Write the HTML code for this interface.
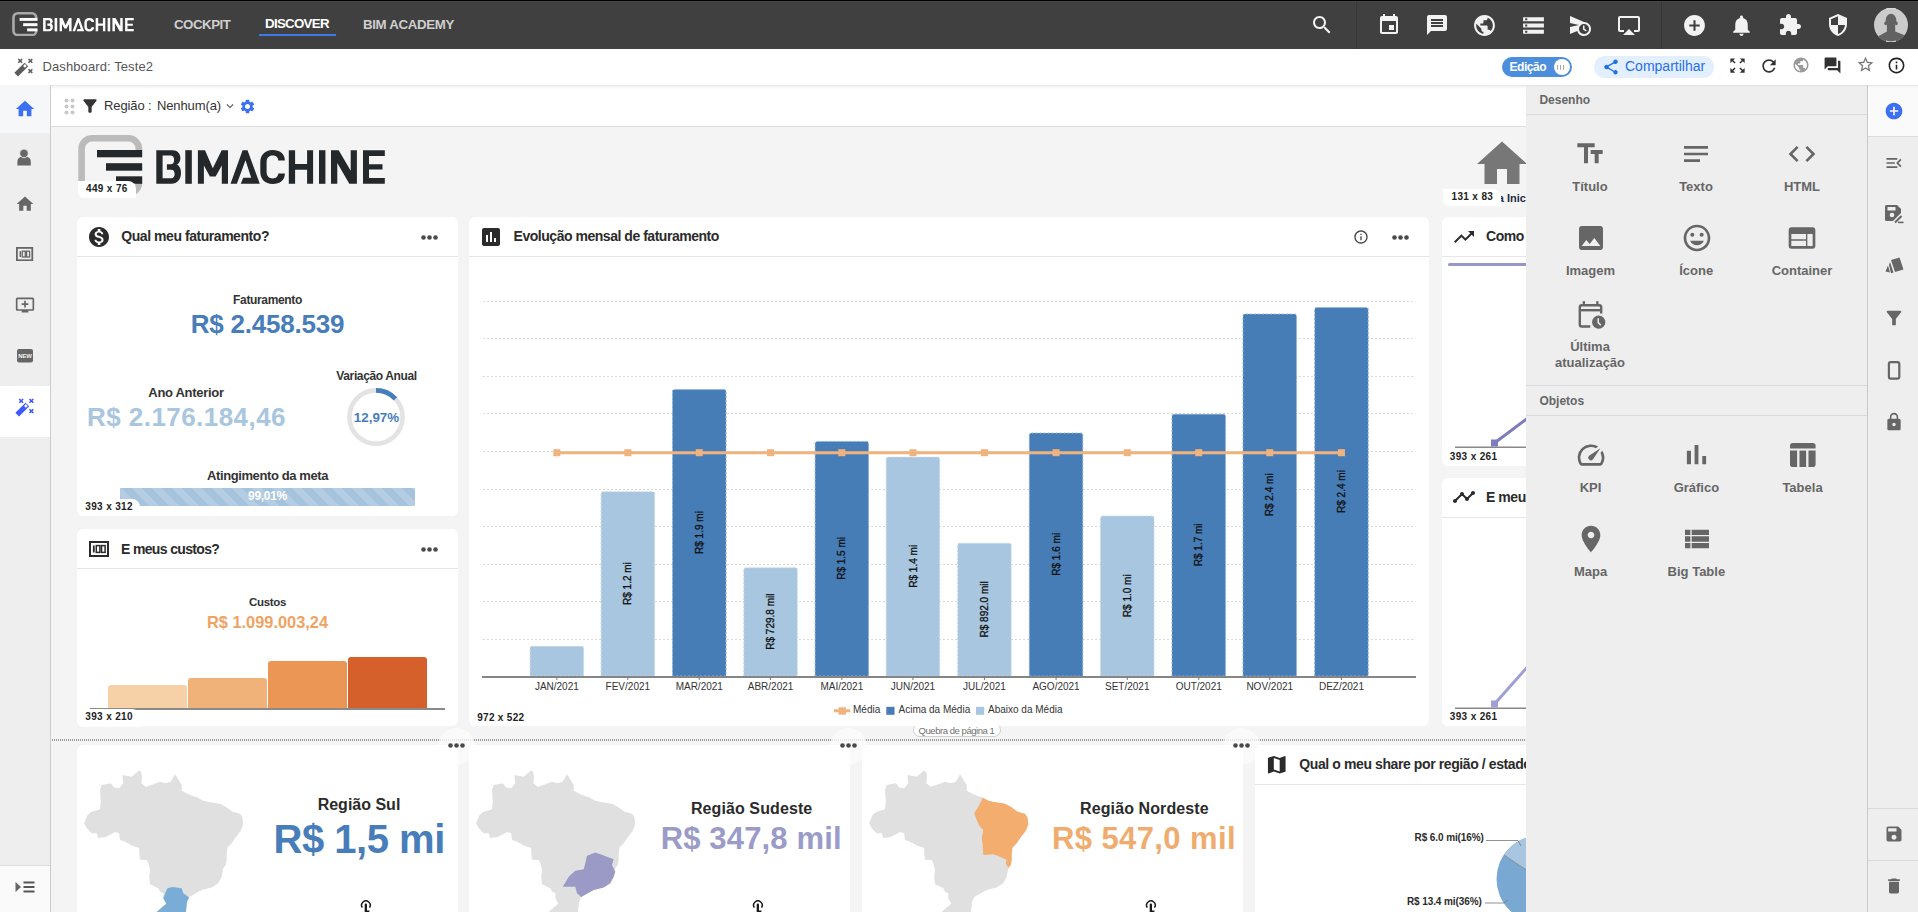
<!DOCTYPE html>
<html><head><meta charset="utf-8"><title>Dashboard</title><style>*{margin:0;padding:0;box-sizing:border-box}
html,body{width:1918px;height:912px;overflow:hidden;background:#f4f4f4;font-family:"Liberation Sans",sans-serif;color:#333}
.a{position:absolute}
.t{white-space:nowrap}
svg{display:block}
</style></head><body>
<div class="a" style="left:0px;top:0px;width:1918px;height:49px;background:#404040;"></div>
<div class="a" style="left:0px;top:0px;width:1918px;height:1px;background:#000;"></div>
<div class="a" style="left:0px;top:1px;width:1918px;height:1px;background:#474747;"></div>
<svg class="a" style="left:11.9px;top:11.7px;" width="121.9" height="24.6" viewBox="0 0 307 62">
<path d="M60.9 15 V14 A10.5 10.5 0 0 0 50.4 3.3 H14.1 A10.5 10.5 0 0 0 3.6 13.8 V47.7 A10.5 10.5 0 0 0 14.1 58.2 H50.4 A10.5 10.5 0 0 0 60.9 47.7 V48.8" fill="none" stroke="#a9a9a9" stroke-width="6.6"/>
<g fill="#ffffff">
<rect x="19" y="15" width="45.2" height="7.3"/><rect x="28" y="28.2" width="36.2" height="7.5"/><rect x="38" y="41.3" width="26.2" height="7.5"/>
<g transform="translate(78,15)">
<path fill-rule="evenodd" d="M0.3 0.2 H16.5 C21.5 0.2 24.4 3.5 24.4 8.2 C24.4 11.2 23 13.3 21 14.6 C23.6 16 25 19 25 23 C25 29.5 21.2 33.8 15.5 33.8 H0.3 Z M6.6 5.6 V28.3 H15.2 C17.6 28.3 18.6 26.6 18.6 24 C18.6 21.2 17.4 19.7 15.2 19.7 H10.9 V14.2 H14.6 C16.9 14.2 18.1 12.8 18.1 10 C18.1 7.2 16.9 5.6 14.6 5.6 Z"/>
<rect x="29.3" y="0.2" width="6.5" height="33.6"/>
<path d="M41.9 0.2 H49 L56.8 18.2 L65.7 0.2 H72 V33.8 H65.8 V15.5 L59.6 26.5 H53.9 L47.9 15.5 V33.8 H41.9 Z"/>
<path d="M74.55 33.8 L86.6 0.2 H91.5 L103.8 33.8 H84.8 L87.2 27.7 H95.2 L89.5 10.2 L80.9 33.8 Z"/>
<path d="M128.9 10.5 C128.9 4 124 0 116.6 0 C109 0 104.3 5 104.3 12 V22 C104.3 29 109 34 116.6 34 C124 34 128.9 30 128.9 23.5 H122.2 C122.2 26.5 120 28.4 116.6 28.4 C113 28.4 110.6 26 110.6 22 V12 C110.6 8 113 5.6 116.6 5.6 C120 5.6 122.2 7.5 122.2 10.5 Z"/>
<path d="M132.8 0.2 H139.1 V14 H151.1 V0.2 H157.1 V33.8 H151.1 V19.8 H139.1 V33.8 H132.8 Z"/>
<rect x="163" y="0.2" width="6.4" height="33.6"/>
<path d="M175 0.2 H182.7 L194.7 20.7 V0.2 H200.9 V33.8 H193.3 L181.3 12.9 V33.8 H175 Z"/>
<path d="M207 0.2 H228.8 V5.9 H213 V14.35 H226.5 V19.6 H213 V28.1 H228.8 V33.8 H207 Z"/>
</g></g></svg>
<div class="a t" style="top:17.94px;font-size:13.3px;line-height:13.3px;color:#cfcfcf;font-weight:bold;letter-spacing:-0.5px;left:174.00px;">COCKPIT</div>
<div class="a t" style="top:16.94px;font-size:13.3px;line-height:13.3px;color:#ffffff;font-weight:bold;letter-spacing:-0.7px;left:265.00px;">DISCOVER</div>
<div class="a" style="left:259px;top:34px;width:77px;height:2px;background:#3b7ae6;"></div>
<div class="a t" style="top:17.94px;font-size:13.3px;line-height:13.3px;color:#cfcfcf;font-weight:bold;letter-spacing:-0.35px;left:363.00px;">BIM ACADEMY</div>
<svg class="a" style="left:1309.60px;top:13.30px" width="24" height="24" viewBox="0 0 24 24"><path fill="#f2f2f2" d="M15.5 14h-.79l-.28-.27C15.41 12.59 16 11.11 16 9.5 16 5.91 13.09 3 9.5 3S3 5.91 3 9.5 5.91 16 9.5 16c1.61 0 3.09-.59 4.23-1.57l.27.28v.79l5 4.99L20.49 19l-4.99-5zm-6 0C7.01 14 5 11.99 5 9.5S7.01 5 9.5 5 14 7.01 14 9.5 11.99 14 9.5 14z"/></svg>
<div class="a" style="left:1356px;top:1px;width:1px;height:48px;background:#363636;"></div>
<svg class="a" style="left:1376.70px;top:13.20px" width="24" height="24" viewBox="0 0 24 24"><path fill="#f2f2f2" d="M17 12h-5v5h5v-5zM16 1v2H8V1H6v2H5c-1.11 0-1.99.9-1.99 2L3 19c0 1.1.89 2 2 2h14c1.1 0 2-.9 2-2V5c0-1.1-.9-2-2-2h-1V1h-2zm3 18H5V8h14v11z"/></svg>
<svg class="a" style="left:1425.00px;top:13.00px" width="24" height="24" viewBox="0 0 24 24"><path fill="#f2f2f2" d="M20 2H4c-1.1 0-1.99.9-1.99 2L2 22l4-4h14c1.1 0 2-.9 2-2V4c0-1.1-.9-2-2-2zm-2 12H6v-2h12v2zm0-3H6V9h12v2zm0-3H6V6h12v2z"/></svg>
<svg class="a" style="left:1472.20px;top:12.50px" width="25" height="25" viewBox="0 0 24 24"><path fill="#f2f2f2" d="M12 2C6.48 2 2 6.48 2 12s4.48 10 10 10 10-4.48 10-10S17.52 2 12 2zm-1 17.93c-3.95-.49-7-3.85-7-7.930 0-.62.08-1.21.21-1.79L9 15v1c0 1.1.9 2 2 2v1.93zm6.9-2.54c-.26-.81-1-1.39-1.9-1.39h-1v-3c0-.55-.45-1-1-1H8v-2h2c.55 0 1-.45 1-1V7h2c1.1 0 2-.9 2-2v-.41c2.930 1.19 5 4.06 5 7.41 0 2.08-.8 3.97-2.1 5.39z"/></svg>
<svg class="a" style="left:1520.50px;top:12.50px" width="25" height="25" viewBox="0 0 24 24"><path fill="#f2f2f2" d="M2 20h20v-4H2v4zm2-3h2v2H4v-2zM2 4v4h20V4H2zm4 3H4V5h2v2zm-4 7h20v-4H2v4zm2-3h2v2H4v-2z"/></svg>
<svg class="a" style="left:1568.30px;top:12.80px" width="24" height="24" viewBox="0 0 24 24"><path fill="#f2f2f2" d="M16.5 12.5H15v4l3 2 .75-1.23-2.25-1.52V12.5zM16 9L2 3v7l9 2-9 2v7l7.27-3.11C10.09 20.83 12.79 23 16 23c3.86 0 7-3.14 7-7s-3.14-7-7-7zm0 12c-2.75 0-4.98-2.22-5-4.97v-.07c.02-2.74 2.25-4.97 5-4.970 2.76 0 5 2.24 5 5S18.76 21 16 21z"/></svg>
<svg class="a" style="left:1617.00px;top:13.00px" width="24" height="24" viewBox="0 0 24 24"><path fill="#f2f2f2" d="M6 22h12l-6-6zM21 3H3c-1.1 0-2 .9-2 2v12c0 1.1.9 2 2 2h4v-2H3V5h18v12h-4v2h4c1.1 0 2-.9 2-2V5c0-1.1-.9-2-2-2z"/></svg>
<div class="a" style="left:1661px;top:1px;width:1px;height:48px;background:#363636;"></div>
<svg class="a" style="left:1681.50px;top:12.50px" width="25" height="25" viewBox="0 0 24 24"><path fill="#f2f2f2" d="M12 2C6.48 2 2 6.48 2 12s4.48 10 10 10 10-4.48 10-10S17.52 2 12 2zm5 11h-4v4h-2v-4H7v-2h4V7h2v4h4v2z"/></svg>
<svg class="a" style="left:1729.30px;top:12.50px" width="25" height="25" viewBox="0 0 24 24"><path fill="#f2f2f2" d="M12 22c1.1 0 2-.9 2-2h-4c0 1.1.89 2 2 2zm6-6v-5c0-3.07-1.64-5.64-4.5-6.32V4c0-.83-.67-1.5-1.5-1.5s-1.5.67-1.5 1.5v.68C7.63 5.36 6 7.92 6 11v5l-2 2v1h16v-1l-2-2z"/></svg>
<svg class="a" style="left:1778.00px;top:12.60px" width="24" height="24" viewBox="0 0 24 24"><path fill="#f2f2f2" d="M20.5 11H19V7c0-1.1-.9-2-2-2h-4V3.5C13 2.12 11.880 1 10.5 1S8 2.12 8 3.5V5H4c-1.1 0-1.99.9-1.99 2v3.8H3.5c1.49 0 2.7 1.21 2.7 2.7s-1.21 2.7-2.7 2.7H2V20c0 1.1.9 2 2 2h3.8v-1.5c0-1.49 1.21-2.7 2.7-2.7 1.49 0 2.7 1.21 2.7 2.7V22H17c1.1 0 2-.9 2-2v-4h1.5c1.38 0 2.5-1.12 2.5-2.5S21.88 11 20.5 11z"/></svg>
<svg class="a" style="left:1826.00px;top:13.00px" width="24" height="24" viewBox="0 0 24 24"><path fill="#f2f2f2" d="M12 1L3 5v6c0 5.55 3.84 10.74 9 12 5.16-1.26 9-6.45 9-12V5l-9-4zm0 10.99h7c-.53 4.12-3.28 7.79-7 8.94V12H5V6.3l7-3.11v8.8z"/></svg>
<svg class="a" style="left:1874px;top:8px" width="34" height="34" viewBox="0 0 34 34">
<defs><clipPath id="avc"><circle cx="17" cy="17" r="17"/></clipPath></defs>
<circle cx="17" cy="17" r="17" fill="#cbcbcb"/>
<g clip-path="url(#avc)" fill="#626262"><ellipse cx="17" cy="12.8" rx="5.4" ry="7"/><ellipse cx="11.6" cy="15.4" rx="1.3" ry="1.8"/><ellipse cx="22.4" cy="15.4" rx="1.3" ry="1.8"/>
<rect x="12.9" y="16" width="8.3" height="9"/><path d="M3.8 28.6 L12.9 23.4 H21.2 L30.6 27.2 L34 34 H0 Z"/></g>
<path d="M12 0.9 A17 17 0 0 1 22 0.9 M12 33.1 A17 17 0 0 0 22 33.1" stroke="#f0f0f0" stroke-opacity="0.7" stroke-width="1.1" fill="none"/></svg>
<div class="a" style="left:0px;top:49px;width:1918px;height:36px;background:#ffffff;"></div>
<svg class="a" style="left:8px;top:52px" width="40" height="30" viewBox="0 0 40 30"><g stroke="#5c5c5c" stroke-width="1.6" fill="none"><path d="M10.3 7 l3.8 3.8 M14.1 7 l-3.8 3.8 M20.5 7 l3.8 3.8 M24.3 7 l-3.8 3.8 M20.5 17.2 l3.8 3.8 M24.3 17.2 l-3.8 3.8"/></g><path d="M8.2 22.7 L18.4 12.5" stroke="#5c5c5c" stroke-width="5.2"/><rect x="15.6" y="12.6" width="2.6" height="2.6" fill="#fff" transform="rotate(45 16.9 13.9)"/></svg>
<div class="a t" style="top:60.00px;font-size:13px;line-height:13px;color:#555;font-weight:normal;letter-spacing:0.1px;left:42.50px;">Dashboard: Teste2</div>
<div class="a" style="left:1502px;top:57px;width:70px;height:20px;background:#4b8fdc;border-radius:10px"></div>
<div class="a t" style="top:61.04px;font-size:12px;line-height:12px;color:#ffffff;font-weight:bold;letter-spacing:-0.45px;left:1509.50px;">Edição</div>
<div class="a" style="left:1553.5px;top:59px;width:16px;height:16px;border-radius:50%;background:#fff"></div>
<svg class="a" style="left:1555px;top:63px" width="12" height="9" viewBox="0 0 12 9"><g stroke="#9a9a9a" stroke-width="0.9"><path d="M2.6 2V6.8M5.5 2V6.8M8.5 2V6.8"/></g></svg>
<div class="a" style="left:1594px;top:56px;width:120px;height:22px;background:#e4effd;border-radius:11px"></div>
<svg class="a" style="left:1601.50px;top:57.80px" width="18" height="18" viewBox="0 0 24 24"><path fill="#1f6fe5" d="M18 16.08c-.76 0-1.44.3-1.96.77L8.91 12.7c.05-.23.09-.46.09-.7s-.04-.47-.09-.7l7.05-4.11c.54.5 1.25.81 2.04.81 1.66 0 3-1.34 3-3s-1.34-3-3-3-3 1.34-3 3c0 .24.04.47.09.7L8.04 9.81C7.5 9.31 6.79 9 6 9c-1.66 0-3 1.34-3 3s1.34 3 3 3c.79 0 1.5-.31 2.04-.81l7.12 4.16c-.05.21-.08.43-.08.65 0 1.61 1.31 2.92 2.92 2.92 1.61 0 2.92-1.31 2.92-2.92s-1.31-2.92-2.92-2.92z"/></svg>
<div class="a t" style="top:59.35px;font-size:14px;line-height:14px;color:#1f6fe5;font-weight:normal;left:1625.00px;">Compartilhar</div>
<svg class="a" style="left:1727.50px;top:55.50px" width="19" height="19" viewBox="0 0 24 24"><path fill="#333" d="M15 3l2.3 2.3-2.89 2.87 1.42 1.42L18.7 6.7 21 9V3zM3 9l2.3-2.3 2.87 2.89 1.42-1.42L6.7 5.3 9 3H3zm6 12l-2.3-2.3 2.89-2.87-1.42-1.42L5.3 17.3 3 15v6zm12-6l-2.3 2.3-2.87-2.89-1.420 1.42 2.89 2.87L15 21h6z"/></svg>
<svg class="a" style="left:1759.20px;top:55.50px" width="20" height="20" viewBox="0 0 24 24"><path fill="#333" d="M17.65 6.35C16.2 4.9 14.21 4 12 4c-4.42 0-7.99 3.58-7.99 8s3.57 8 7.99 8c3.73 0 6.84-2.55 7.73-6h-2.08c-.82 2.33-3.04 4-5.65 4-3.31 0-6-2.69-6-6s2.69-6 6-6c1.66 0 3.14.69 4.22 1.78L13 11h7V4l-2.35 2.35z"/></svg>
<svg class="a" style="left:1792.00px;top:56.30px" width="18" height="18" viewBox="0 0 24 24"><path fill="#9a9a9a" d="M12 2C6.48 2 2 6.48 2 12s4.48 10 10 10 10-4.48 10-10S17.52 2 12 2zm-1 17.93c-3.95-.49-7-3.85-7-7.930 0-.62.08-1.21.21-1.79L9 15v1c0 1.1.9 2 2 2v1.93zm6.9-2.54c-.26-.81-1-1.39-1.9-1.39h-1v-3c0-.55-.45-1-1-1H8v-2h2c.55 0 1-.45 1-1V7h2c1.1 0 2-.9 2-2v-.41c2.930 1.19 5 4.06 5 7.41 0 2.08-.8 3.97-2.1 5.39z"/></svg>
<svg class="a" style="left:1823.30px;top:55.50px" width="19" height="19" viewBox="0 0 24 24"><path fill="#333" d="M21 6h-2v9H6v2c0 .55.45 1 1 1h11l4 4V7c0-.55-.45-1-1-1zm-4 6V3c0-.55-.45-1-1-1H3c-.55 0-1 .45-1 1v14l4-4h10c.55 0 1-.45 1-1z"/></svg>
<svg class="a" style="left:1855.50px;top:55.40px" width="19" height="19" viewBox="0 0 24 24"><path fill="#777" d="M22 9.24l-7.19-.62L12 2 9.19 8.63 2 9.24l5.46 4.73L5.82 21 12 17.27 18.18 21l-1.63-7.03L22 9.24zM12 15.4l-3.76 2.27 1-4.28-3.32-2.88 4.38-.38L12 6.1l1.71 4.04 4.38.38-3.32 2.88 1 4.28L12 15.4z"/></svg>
<svg class="a" style="left:1887.30px;top:55.80px" width="19" height="19" viewBox="0 0 24 24"><path fill="#222" d="M11 7h2v2h-2zm0 4h2v6h-2zm1-9C6.48 2 2 6.48 2 12s4.48 10 10 10 10-4.48 10-10S17.52 2 12 2zm0 18c-4.41 0-8-3.59-8-8s3.59-8 8-8 8 3.59 8 8-3.59 8-8 8z"/></svg>
<div class="a" style="left:0px;top:85px;width:50px;height:827px;background:#eeeeee;"></div>
<div class="a" style="left:50px;top:85px;width:1px;height:827px;background:#cccccc;"></div>
<div class="a" style="left:0px;top:85px;width:50px;height:48px;background:#f6f7f9;"></div>
<div class="a" style="left:0px;top:386px;width:50px;height:51px;background:#ffffff;"></div>
<div class="a" style="left:0px;top:865px;width:50px;height:1px;background:#dddddd;"></div>
<div class="a" style="left:0px;top:866px;width:50px;height:46px;background:#fafafa;"></div>
<svg class="a" style="left:14.00px;top:98.00px" width="22" height="22" viewBox="0 0 24 24"><path fill="#3d6ff2" d="M10 20v-6h4v6h5v-8h3L12 3 2 12h3v8z"/></svg>
<svg class="a" style="left:10px;top:145px" width="30" height="25" viewBox="10 145 30 25"><path d="M17.4 165.4 V161.5 Q17.4 156.6 24.1 156.6 Q30.8 156.6 30.8 161.5 V165.4 Z" fill="#666"/><circle cx="24" cy="153.4" r="4.3" fill="#666" stroke="#eee" stroke-width="0.9"/></svg>
<svg class="a" style="left:15.00px;top:193.50px" width="20" height="20" viewBox="0 0 24 24"><path fill="#666" d="M10 20v-6h4v6h5v-8h3L12 3 2 12h3v8z"/></svg>
<svg class="a" style="left:16.4px;top:246.9px" width="17.2" height="14.2" viewBox="0 0 17.2 14.2"><rect x="0.9" y="0.9" width="15.4" height="12.4" fill="none" stroke="#666" stroke-width="1.8"/><path d="M4.3 4.2V10" stroke="#666" stroke-width="1.5"/><rect x="6.3" y="4.2" width="3" height="5.8" fill="none" stroke="#666" stroke-width="1.3"/><rect x="10.6" y="4.2" width="3" height="5.8" fill="none" stroke="#666" stroke-width="1.3"/></svg>
<svg class="a" style="left:15.00px;top:295.00px" width="20" height="20" viewBox="0 0 24 24"><path fill="#666" d="M21 3H3c-1.11 0-2 .89-2 2v12c0 1.1.89 2 2 2h5v2h8v-2h5c1.1 0 1.99-.9 1.99-2L23 5c0-1.11-.9-2-2-2zm0 14H3V5h18v12zM16 10v2h-3v3h-2v-3H8v-2h3V7h2v3h3z"/></svg>
<svg class="a" style="left:16.9px;top:349.3px" width="16" height="13.6" viewBox="0 0 16 13.6"><rect x="0" y="0" width="16" height="13.6" rx="2" fill="#666"/><text x="8" y="9.3" font-family="Liberation Sans" font-size="6" font-weight="bold" fill="#f2f2f2" text-anchor="middle" letter-spacing="-0.2">NEW</text></svg>
<svg class="a" style="left:9.2px;top:392px" width="40" height="30" viewBox="0 0 40 30"><g stroke="#3d5afe" stroke-width="1.6" fill="none"><path d="M10.3 7 l3.8 3.8 M14.1 7 l-3.8 3.8 M20.5 7 l3.8 3.8 M24.3 7 l-3.8 3.8 M20.5 17.2 l3.8 3.8 M24.3 17.2 l-3.8 3.8"/></g><path d="M8.2 22.7 L18.4 12.5" stroke="#3d5afe" stroke-width="5.2"/><rect x="15.6" y="12.6" width="2.6" height="2.6" fill="#fff" transform="rotate(45 16.9 13.9)"/></svg>
<svg class="a" style="left:15px;top:881px" width="20" height="12" viewBox="0 0 20 12"><path d="M0.5 1 L6 6 L0.5 11 Z" fill="#666"/><g fill="#555"><rect x="8.5" y="0.5" width="11" height="2"/><rect x="8.5" y="5" width="11" height="2"/><rect x="8.5" y="9.5" width="11" height="2"/></g></svg>
<div class="a" style="left:51px;top:85px;width:1475px;height:41px;background:#ffffff;"></div>
<div class="a" style="left:51px;top:85px;width:1475px;height:4px;background:linear-gradient(#e6e6e6,#f3f3f3 40%,#ffffff);"></div>
<div class="a" style="left:51px;top:126px;width:1475px;height:1px;background:#dddddd;"></div>
<svg class="a" style="left:63.5px;top:97.5px" width="11" height="17" viewBox="0 0 11 17"><g fill="#c8c8c8"><circle cx="2.5" cy="2.5" r="2"/><circle cx="8.5" cy="2.5" r="2"/><circle cx="2.5" cy="8.5" r="2"/><circle cx="8.5" cy="8.5" r="2"/><circle cx="2.5" cy="14.5" r="2"/><circle cx="8.5" cy="14.5" r="2"/></g></svg>
<svg class="a" style="left:80.00px;top:96.00px" width="20" height="20" viewBox="0 0 24 24"><path fill="#333" d="M4.25 5.61C6.27 8.2 10 13 10 13v6c0 .55.45 1 1 1h2c.55 0 1-.45 1-1v-6s3.72-4.8 5.74-7.39c.51-.66.04-1.61-.79-1.61H5.04c-.83 0-1.3.95-.79 1.61z"/></svg>
<div class="a t" style="top:99.00px;font-size:13px;line-height:13px;color:#333;font-weight:normal;letter-spacing:-0.1px;left:104.00px;">Região :<span style="margin-left:5.3px">Nenhum(a)</span></div>
<svg class="a" style="left:222.50px;top:99.00px" width="14" height="14" viewBox="0 0 24 24"><path fill="#555" d="M16.59 8.59L12 13.17 7.41 8.59 6 10l6 6 6-6z"/></svg>
<svg class="a" style="left:239.00px;top:97.50px" width="17" height="17" viewBox="0 0 24 24"><path fill="#3d6ff2" d="M19.14 12.94c.04-.3.06-.61.06-.94 0-.32-.02-.64-.07-.94l2.03-1.58c.18-.14.23-.41.12-.61l-1.92-3.32c-.12-.22-.37-.29-.59-.22l-2.39.96c-.5-.38-1.03-.7-1.62-.94l-.36-2.54c-.04-.24-.24-.41-.48-.41h-3.84c-.24 0-.43.17-.47.41l-.36 2.54c-.59.24-1.13.57-1.62.94l-2.39-.96c-.22-.08-.47 0-.59.22L2.74 8.87c-.12.21-.08.47.12.61l2.03 1.58c-.05.3-.09.63-.09.94s.02.64.07.94l-2.030 1.58c-.18.14-.23.41-.12.61l1.92 3.32c.12.22.37.29.59.22l2.39-.96c.5.38 1.03.7 1.62.94l.36 2.54c.05.24.24.41.48.41h3.84c.24 0 .44-.17.47-.41l.36-2.54c.59-.24 1.13-.56 1.62-.94l2.39.96c.22.08.47 0 .59-.22l1.92-3.32c.12-.22.07-.47-.12-.61l-2.01-1.58zM12 15.6c-1.98 0-3.6-1.62-3.6-3.6s1.62-3.6 3.6-3.6 3.6 1.62 3.6 3.6-1.62 3.6-3.6 3.6z"/></svg>
<svg class="a" style="left:78px;top:135px;" width="307" height="62" viewBox="0 0 307 62">
<path d="M60.9 15 V14 A10.5 10.5 0 0 0 50.4 3.3 H14.1 A10.5 10.5 0 0 0 3.6 13.8 V47.7 A10.5 10.5 0 0 0 14.1 58.2 H50.4 A10.5 10.5 0 0 0 60.9 47.7 V48.8" fill="none" stroke="#bbbbbb" stroke-width="6.6"/>
<g fill="#25282b">
<rect x="19" y="15" width="45.2" height="7.3"/><rect x="28" y="28.2" width="36.2" height="7.5"/><rect x="38" y="41.3" width="26.2" height="7.5"/>
<g transform="translate(78,15)">
<path fill-rule="evenodd" d="M0.3 0.2 H16.5 C21.5 0.2 24.4 3.5 24.4 8.2 C24.4 11.2 23 13.3 21 14.6 C23.6 16 25 19 25 23 C25 29.5 21.2 33.8 15.5 33.8 H0.3 Z M6.6 5.6 V28.3 H15.2 C17.6 28.3 18.6 26.6 18.6 24 C18.6 21.2 17.4 19.7 15.2 19.7 H10.9 V14.2 H14.6 C16.9 14.2 18.1 12.8 18.1 10 C18.1 7.2 16.9 5.6 14.6 5.6 Z"/>
<rect x="29.3" y="0.2" width="6.5" height="33.6"/>
<path d="M41.9 0.2 H49 L56.8 18.2 L65.7 0.2 H72 V33.8 H65.8 V15.5 L59.6 26.5 H53.9 L47.9 15.5 V33.8 H41.9 Z"/>
<path d="M74.55 33.8 L86.6 0.2 H91.5 L103.8 33.8 H84.8 L87.2 27.7 H95.2 L89.5 10.2 L80.9 33.8 Z"/>
<path d="M128.9 10.5 C128.9 4 124 0 116.6 0 C109 0 104.3 5 104.3 12 V22 C104.3 29 109 34 116.6 34 C124 34 128.9 30 128.9 23.5 H122.2 C122.2 26.5 120 28.4 116.6 28.4 C113 28.4 110.6 26 110.6 22 V12 C110.6 8 113 5.6 116.6 5.6 C120 5.6 122.2 7.5 122.2 10.5 Z"/>
<path d="M132.8 0.2 H139.1 V14 H151.1 V0.2 H157.1 V33.8 H151.1 V19.8 H139.1 V33.8 H132.8 Z"/>
<rect x="163" y="0.2" width="6.4" height="33.6"/>
<path d="M175 0.2 H182.7 L194.7 20.7 V0.2 H200.9 V33.8 H193.3 L181.3 12.9 V33.8 H175 Z"/>
<path d="M207 0.2 H228.8 V5.9 H213 V14.35 H226.5 V19.6 H213 V28.1 H228.8 V33.8 H207 Z"/>
</g></g></svg>
<div class="a" style="left:78px;top:180.9px;width:58px;height:17.5px;background:#fff;border-radius:0 8px 0 6px"></div>
<div class="a t" style="top:184.13px;font-size:10px;line-height:10px;color:#222;font-weight:bold;letter-spacing:0.35px;left:86.00px;">449 x 76</div>
<div class="a" style="left:77px;top:217px;width:381px;height:299px;background:#fff;border-radius:6px"></div>
<div class="a" style="left:77px;top:256px;width:381px;height:1px;background:#e4e6e9;"></div>
<svg class="a" style="left:87.00px;top:225.00px" width="24" height="24" viewBox="0 0 24 24"><path fill="#2b2b2b" d="M12 2C6.48 2 2 6.48 2 12s4.48 10 10 10 10-4.48 10-10S17.52 2 12 2zm1.41 16.09V20h-2.67v-1.93c-1.71-.36-3.16-1.46-3.27-3.4h1.96c.1 1.05.82 1.87 2.65 1.87 1.96 0 2.4-.98 2.4-1.59 0-.83-.44-1.61-2.67-2.14-2.48-.6-4.18-1.62-4.18-3.67 0-1.72 1.39-2.84 3.11-3.21V4h2.67v1.95c1.86.45 2.79 1.86 2.85 3.39H14.3c-.05-1.11-.64-1.87-2.22-1.87-1.5 0-2.4.68-2.4 1.64 0 .84.65 1.39 2.67 1.91s4.18 1.39 4.18 3.91c-.01 1.83-1.38 2.83-3.12 3.16z"/></svg>
<div class="a t" style="top:229.05px;font-size:14px;line-height:14px;color:#2b2b2b;font-weight:bold;letter-spacing:-0.45px;left:121.30px;">Qual meu faturamento?</div>
<svg class="a" style="left:420.5px;top:234.5px" width="17" height="5" viewBox="0 0 17 5"><g fill="#4a4a4a"><circle cx="2.5" cy="2.5" r="2.3"/><circle cx="8.5" cy="2.5" r="2.3"/><circle cx="14.5" cy="2.5" r="2.3"/></g></svg>
<div class="a t" style="top:293.84px;font-size:12px;line-height:12px;color:#333;font-weight:bold;letter-spacing:-0.35px;left:67.50px;width:400px;text-align:center;">Faturamento</div>
<div class="a t" style="top:310.59px;font-size:26px;line-height:26px;color:#477db9;font-weight:bold;letter-spacing:-0.2px;left:67.50px;width:400px;text-align:center;">R$ 2.458.539</div>
<div class="a t" style="top:369.84px;font-size:12px;line-height:12px;color:#333;font-weight:bold;letter-spacing:-0.38px;left:176.50px;width:400px;text-align:center;">Variação Anual</div>
<div class="a t" style="top:386.00px;font-size:13px;line-height:13px;color:#333;font-weight:bold;letter-spacing:-0.3px;left:-14.00px;width:400px;text-align:center;">Ano Anterior</div>
<div class="a t" style="top:403.99px;font-size:26px;line-height:26px;color:#a9c6e0;font-weight:bold;letter-spacing:0.45px;left:-13.50px;width:400px;text-align:center;">R$ 2.176.184,46</div>
<svg class="a" style="left:346.2px;top:386.7px" width="60" height="60" viewBox="0 0 60 60">
<circle cx="30" cy="30" r="26.6" fill="none" stroke="#e3e3e3" stroke-width="4.6"/>
<circle cx="30" cy="30" r="26.6" fill="none" stroke="#477db9" stroke-width="4.6" stroke-dasharray="21.7 200" transform="rotate(-90 30 30)"/></svg>
<div class="a t" style="top:410.56px;font-size:13.4px;line-height:13.4px;color:#477db9;font-weight:bold;left:176.50px;width:400px;text-align:center;">12,97%</div>
<div class="a t" style="top:469.00px;font-size:13px;line-height:13px;color:#333;font-weight:bold;letter-spacing:-0.4px;left:67.50px;width:400px;text-align:center;">Atingimento da meta</div>
<div class="a" style="left:120px;top:488px;width:295px;height:18px;background:repeating-linear-gradient(45deg,#a6c3dd 0 7.05px,#b5cde3 7.05px 14.1px)"></div>
<div class="a t" style="top:489.84px;font-size:12px;line-height:12px;color:#ffffff;font-weight:bold;letter-spacing:-0.3px;left:67.50px;width:400px;text-align:center;">99,01%</div>
<div class="a" style="left:77px;top:498.5px;width:63px;height:17.5px;background:#fff;border-radius:0 8px 0 6px"></div>
<div class="a t" style="top:501.74px;font-size:10px;line-height:10px;color:#222;font-weight:bold;letter-spacing:0.35px;left:85.30px;">393 x 312</div>
<div class="a" style="left:77px;top:529px;width:381px;height:197px;background:#fff;border-radius:6px"></div>
<div class="a" style="left:77px;top:568px;width:381px;height:1px;background:#e4e6e9;"></div>
<svg class="a" style="left:89px;top:541px" width="20" height="16" viewBox="0 0 20 16"><rect x="1" y="1" width="18" height="14" fill="none" stroke="#2b2b2b" stroke-width="2"/><path d="M4.8 4.5V11.5" stroke="#2b2b2b" stroke-width="1.8"/><rect x="7.3" y="4.6" width="3.6" height="6.8" fill="none" stroke="#2b2b2b" stroke-width="1.5"/><rect x="12.5" y="4.6" width="3.6" height="6.8" fill="none" stroke="#2b2b2b" stroke-width="1.5"/></svg>
<div class="a t" style="top:541.55px;font-size:14px;line-height:14px;color:#2b2b2b;font-weight:bold;letter-spacing:-0.65px;left:121.00px;">E meus custos?</div>
<svg class="a" style="left:420.5px;top:546.5px" width="17" height="5" viewBox="0 0 17 5"><g fill="#4a4a4a"><circle cx="2.5" cy="2.5" r="2.3"/><circle cx="8.5" cy="2.5" r="2.3"/><circle cx="14.5" cy="2.5" r="2.3"/></g></svg>
<div class="a t" style="top:596.57px;font-size:11.5px;line-height:11.5px;color:#333;font-weight:bold;letter-spacing:-0.3px;left:67.50px;width:400px;text-align:center;">Custos</div>
<div class="a t" style="top:614.12px;font-size:16.4px;line-height:16.4px;color:#efa363;font-weight:bold;left:67.50px;width:400px;text-align:center;">R$ 1.099.003,24</div>
<div class="a" style="left:108px;top:685px;width:79px;height:24px;background:#f6d1a7;border-radius:3px 3px 0 0"></div>
<div class="a" style="left:188px;top:678px;width:79px;height:31px;background:#f1b27a;border-radius:3px 3px 0 0"></div>
<div class="a" style="left:268px;top:661.3px;width:79px;height:47.700000000000045px;background:#ec9655;border-radius:3px 3px 0 0"></div>
<div class="a" style="left:348px;top:656.8px;width:79px;height:52.200000000000045px;background:#d6602b;border-radius:3px 3px 0 0"></div>
<div class="a" style="left:89.5px;top:708px;width:355px;height:2px;background:#8a8a8a;"></div>
<div class="a" style="left:77px;top:709.1px;width:63px;height:17.5px;background:#fff;border-radius:0 8px 0 6px"></div>
<div class="a t" style="top:712.34px;font-size:10px;line-height:10px;color:#222;font-weight:bold;letter-spacing:0.35px;left:85.30px;">393 x 210</div>
<div class="a" style="left:469px;top:217px;width:960px;height:509px;background:#fff;border-radius:6px"></div>
<div class="a" style="left:469px;top:256px;width:960px;height:1px;background:#e4e6e9;"></div>
<svg class="a" style="left:479.00px;top:225.00px" width="24" height="24" viewBox="0 0 24 24"><path fill="#2b2b2b" d="M19 3H5c-1.1 0-2 .9-2 2v14c0 1.1.9 2 2 2h14c1.1 0 2-.9 2-2V5c0-1.1-.9-2-2-2zM9 17H7v-7h2v7zm4 0h-2V7h2v10zm4 0h-2v-4h2v4z"/></svg>
<div class="a t" style="top:229.05px;font-size:14px;line-height:14px;color:#2b2b2b;font-weight:bold;letter-spacing:-0.47px;left:513.60px;">Evolução mensal de faturamento</div>
<svg class="a" style="left:1353.00px;top:228.70px" width="16" height="16" viewBox="0 0 24 24"><path fill="#444" d="M11 7h2v2h-2zm0 4h2v6h-2zm1-9C6.48 2 2 6.48 2 12s4.48 10 10 10 10-4.48 10-10S17.52 2 12 2zm0 18c-4.41 0-8-3.59-8-8s3.59-8 8-8 8 3.59 8 8-3.59 8-8 8z"/></svg>
<svg class="a" style="left:1391.5px;top:234.5px" width="17" height="5" viewBox="0 0 17 5"><g fill="#4a4a4a"><circle cx="2.5" cy="2.5" r="2.3"/><circle cx="8.5" cy="2.5" r="2.3"/><circle cx="14.5" cy="2.5" r="2.3"/></g></svg>
<svg class="a" style="left:0;top:0" width="1918" height="912" viewBox="0 0 1918 912"><line x1="483" y1="301.5" x2="1413" y2="301.5" stroke="#d9d9d9" stroke-width="1" stroke-dasharray="2 2"/><line x1="483" y1="338.5" x2="1413" y2="338.5" stroke="#d9d9d9" stroke-width="1" stroke-dasharray="2 2"/><line x1="483" y1="376.5" x2="1413" y2="376.5" stroke="#d9d9d9" stroke-width="1" stroke-dasharray="2 2"/><line x1="483" y1="413.5" x2="1413" y2="413.5" stroke="#d9d9d9" stroke-width="1" stroke-dasharray="2 2"/><line x1="483" y1="451.5" x2="1413" y2="451.5" stroke="#d9d9d9" stroke-width="1" stroke-dasharray="2 2"/><line x1="483" y1="489.5" x2="1413" y2="489.5" stroke="#d9d9d9" stroke-width="1" stroke-dasharray="2 2"/><line x1="483" y1="526.5" x2="1413" y2="526.5" stroke="#d9d9d9" stroke-width="1" stroke-dasharray="2 2"/><line x1="483" y1="564.5" x2="1413" y2="564.5" stroke="#d9d9d9" stroke-width="1" stroke-dasharray="2 2"/><line x1="483" y1="601.5" x2="1413" y2="601.5" stroke="#d9d9d9" stroke-width="1" stroke-dasharray="2 2"/><line x1="483" y1="639.5" x2="1413" y2="639.5" stroke="#d9d9d9" stroke-width="1" stroke-dasharray="2 2"/><path d="M530.1 676 V648.3 Q530.1 646.3 532.1 646.3 H581.6 Q583.6 646.3 583.6 648.3 V676 Z" fill="#a8c6df" stroke="#c6d9ea" stroke-width="1" stroke-dasharray="2 2"/><path d="M601.1 676 V493.7 Q601.1 491.7 603.1 491.7 H652.6 Q654.6 491.7 654.6 493.7 V676 Z" fill="#a8c6df" stroke="#c6d9ea" stroke-width="1" stroke-dasharray="2 2"/><path d="M672.5 676 V391.6 Q672.5 389.6 674.5 389.6 H724.0 Q726.0 389.6 726.0 391.6 V676 Z" fill="#477db7" stroke="#8fb2d9" stroke-width="1" stroke-dasharray="2 2"/><path d="M743.8 676 V569.8 Q743.8 567.8 745.8 567.8 H795.3 Q797.3 567.8 797.3 569.8 V676 Z" fill="#a8c6df" stroke="#c6d9ea" stroke-width="1" stroke-dasharray="2 2"/><path d="M815.1 676 V443.4 Q815.1 441.4 817.1 441.4 H866.6 Q868.6 441.4 868.6 443.4 V676 Z" fill="#477db7" stroke="#8fb2d9" stroke-width="1" stroke-dasharray="2 2"/><path d="M886.2 676 V459.1 Q886.2 457.1 888.2 457.1 H937.7 Q939.7 457.1 939.7 459.1 V676 Z" fill="#a8c6df" stroke="#c6d9ea" stroke-width="1" stroke-dasharray="2 2"/><path d="M957.7 676 V545.3 Q957.7 543.3 959.7 543.3 H1009.2 Q1011.2 543.3 1011.2 545.3 V676 Z" fill="#a8c6df" stroke="#c6d9ea" stroke-width="1" stroke-dasharray="2 2"/><path d="M1029.3 676 V435.1 Q1029.3 433.1 1031.3 433.1 H1080.8 Q1082.8 433.1 1082.8 435.1 V676 Z" fill="#477db7" stroke="#8fb2d9" stroke-width="1" stroke-dasharray="2 2"/><path d="M1100.5 676 V518.0 Q1100.5 516.0 1102.5 516.0 H1152.0 Q1154.0 516.0 1154.0 518.0 V676 Z" fill="#a8c6df" stroke="#c6d9ea" stroke-width="1" stroke-dasharray="2 2"/><path d="M1172.0 676 V416.2 Q1172.0 414.2 1174.0 414.2 H1223.5 Q1225.5 414.2 1225.5 416.2 V676 Z" fill="#477db7" stroke="#8fb2d9" stroke-width="1" stroke-dasharray="2 2"/><path d="M1243.0 676 V316.1 Q1243.0 314.1 1245.0 314.1 H1294.5 Q1296.5 314.1 1296.5 316.1 V676 Z" fill="#477db7" stroke="#8fb2d9" stroke-width="1" stroke-dasharray="2 2"/><path d="M1314.7 676 V309.6 Q1314.7 307.6 1316.7 307.6 H1366.2 Q1368.2 307.6 1368.2 309.6 V676 Z" fill="#477db7" stroke="#8fb2d9" stroke-width="1" stroke-dasharray="2 2"/><rect x="482" y="676" width="934" height="2" fill="#858585"/><line x1="556.85" y1="677" x2="556.85" y2="680" stroke="#7a7a7a" stroke-width="1"/><text x="556.85" y="690.2" font-family="Liberation Sans" font-size="10" fill="#333" text-anchor="middle">JAN/2021</text><line x1="627.85" y1="677" x2="627.85" y2="680" stroke="#7a7a7a" stroke-width="1"/><text x="627.85" y="690.2" font-family="Liberation Sans" font-size="10" fill="#333" text-anchor="middle">FEV/2021</text><line x1="699.25" y1="677" x2="699.25" y2="680" stroke="#7a7a7a" stroke-width="1"/><text x="699.25" y="690.2" font-family="Liberation Sans" font-size="10" fill="#333" text-anchor="middle">MAR/2021</text><line x1="770.55" y1="677" x2="770.55" y2="680" stroke="#7a7a7a" stroke-width="1"/><text x="770.55" y="690.2" font-family="Liberation Sans" font-size="10" fill="#333" text-anchor="middle">ABR/2021</text><line x1="841.85" y1="677" x2="841.85" y2="680" stroke="#7a7a7a" stroke-width="1"/><text x="841.85" y="690.2" font-family="Liberation Sans" font-size="10" fill="#333" text-anchor="middle">MAI/2021</text><line x1="912.95" y1="677" x2="912.95" y2="680" stroke="#7a7a7a" stroke-width="1"/><text x="912.95" y="690.2" font-family="Liberation Sans" font-size="10" fill="#333" text-anchor="middle">JUN/2021</text><line x1="984.45" y1="677" x2="984.45" y2="680" stroke="#7a7a7a" stroke-width="1"/><text x="984.45" y="690.2" font-family="Liberation Sans" font-size="10" fill="#333" text-anchor="middle">JUL/2021</text><line x1="1056.05" y1="677" x2="1056.05" y2="680" stroke="#7a7a7a" stroke-width="1"/><text x="1056.05" y="690.2" font-family="Liberation Sans" font-size="10" fill="#333" text-anchor="middle">AGO/2021</text><line x1="1127.25" y1="677" x2="1127.25" y2="680" stroke="#7a7a7a" stroke-width="1"/><text x="1127.25" y="690.2" font-family="Liberation Sans" font-size="10" fill="#333" text-anchor="middle">SET/2021</text><line x1="1198.75" y1="677" x2="1198.75" y2="680" stroke="#7a7a7a" stroke-width="1"/><text x="1198.75" y="690.2" font-family="Liberation Sans" font-size="10" fill="#333" text-anchor="middle">OUT/2021</text><line x1="1269.75" y1="677" x2="1269.75" y2="680" stroke="#7a7a7a" stroke-width="1"/><text x="1269.75" y="690.2" font-family="Liberation Sans" font-size="10" fill="#333" text-anchor="middle">NOV/2021</text><line x1="1341.45" y1="677" x2="1341.45" y2="680" stroke="#7a7a7a" stroke-width="1"/><text x="1341.45" y="690.2" font-family="Liberation Sans" font-size="10" fill="#333" text-anchor="middle">DEZ/2021</text><line x1="556.85" y1="452.7" x2="1341.45" y2="452.7" stroke="#f0b37e" stroke-width="3"/><rect x="553.35" y="449.2" width="7" height="7" fill="#f0b37e"/><rect x="624.35" y="449.2" width="7" height="7" fill="#f0b37e"/><rect x="695.75" y="449.2" width="7" height="7" fill="#f0b37e"/><rect x="767.05" y="449.2" width="7" height="7" fill="#f0b37e"/><rect x="838.35" y="449.2" width="7" height="7" fill="#f0b37e"/><rect x="909.45" y="449.2" width="7" height="7" fill="#f0b37e"/><rect x="980.95" y="449.2" width="7" height="7" fill="#f0b37e"/><rect x="1052.55" y="449.2" width="7" height="7" fill="#f0b37e"/><rect x="1123.75" y="449.2" width="7" height="7" fill="#f0b37e"/><rect x="1195.25" y="449.2" width="7" height="7" fill="#f0b37e"/><rect x="1266.25" y="449.2" width="7" height="7" fill="#f0b37e"/><rect x="1337.95" y="449.2" width="7" height="7" fill="#f0b37e"/><text x="0" y="0" transform="translate(631.45 583.6) rotate(-90)" font-family="Liberation Sans" font-size="10" fill="#111" stroke="#111" stroke-width="0.3" text-anchor="middle">R$ 1.2 mi</text><text x="0" y="0" transform="translate(702.85 532.55) rotate(-90)" font-family="Liberation Sans" font-size="10" fill="#111" stroke="#111" stroke-width="0.3" text-anchor="middle">R$ 1.9 mi</text><text x="0" y="0" transform="translate(774.15 621.65) rotate(-90)" font-family="Liberation Sans" font-size="10" fill="#111" stroke="#111" stroke-width="0.3" text-anchor="middle">R$ 729.8 mil</text><text x="0" y="0" transform="translate(845.45 558.45) rotate(-90)" font-family="Liberation Sans" font-size="10" fill="#111" stroke="#111" stroke-width="0.3" text-anchor="middle">R$ 1.5 mi</text><text x="0" y="0" transform="translate(916.5500000000001 566.3) rotate(-90)" font-family="Liberation Sans" font-size="10" fill="#111" stroke="#111" stroke-width="0.3" text-anchor="middle">R$ 1.4 mi</text><text x="0" y="0" transform="translate(988.0500000000001 609.4) rotate(-90)" font-family="Liberation Sans" font-size="10" fill="#111" stroke="#111" stroke-width="0.3" text-anchor="middle">R$ 892.0 mil</text><text x="0" y="0" transform="translate(1059.6499999999999 554.3) rotate(-90)" font-family="Liberation Sans" font-size="10" fill="#111" stroke="#111" stroke-width="0.3" text-anchor="middle">R$ 1.6 mi</text><text x="0" y="0" transform="translate(1130.85 595.75) rotate(-90)" font-family="Liberation Sans" font-size="10" fill="#111" stroke="#111" stroke-width="0.3" text-anchor="middle">R$ 1.0 mi</text><text x="0" y="0" transform="translate(1202.35 544.85) rotate(-90)" font-family="Liberation Sans" font-size="10" fill="#111" stroke="#111" stroke-width="0.3" text-anchor="middle">R$ 1.7 mi</text><text x="0" y="0" transform="translate(1273.35 494.8) rotate(-90)" font-family="Liberation Sans" font-size="10" fill="#111" stroke="#111" stroke-width="0.3" text-anchor="middle">R$ 2.4 mi</text><text x="0" y="0" transform="translate(1345.05 491.55) rotate(-90)" font-family="Liberation Sans" font-size="10" fill="#111" stroke="#111" stroke-width="0.3" text-anchor="middle">R$ 2.4 mi</text><rect x="833.8" y="709.3" width="16.5" height="3" fill="#f0b37e"/><rect x="838.5" y="707.3" width="7.4" height="7.4" fill="#f0b37e"/><text x="853" y="712.5" font-family="Liberation Sans" font-size="10" fill="#333">Média</text><rect x="886.3" y="706.8" width="8.2" height="8" fill="#477db7"/><text x="898.5" y="712.5" font-family="Liberation Sans" font-size="10" fill="#333">Acima da Média</text><rect x="976" y="706.8" width="8.2" height="8" fill="#a8c6df"/><text x="988" y="712.5" font-family="Liberation Sans" font-size="10" fill="#333">Abaixo da Média</text></svg>
<div class="a t" style="top:712.83px;font-size:10px;line-height:10px;color:#222;font-weight:bold;letter-spacing:0.3px;left:477.20px;">972 x 522</div>
<div class="a" style="left:1442px;top:217px;width:381px;height:249px;background:#fff;border-radius:6px"></div>
<div class="a" style="left:1442px;top:256px;width:381px;height:1px;background:#e4e6e9;"></div>
<div class="a" style="left:1442px;top:478px;width:381px;height:248px;background:#fff;border-radius:6px"></div>
<div class="a" style="left:1442px;top:517px;width:381px;height:1px;background:#e4e6e9;"></div>
<svg class="a" style="left:1452.00px;top:225.00px" width="24" height="24" viewBox="0 0 24 24"><path fill="#2b2b2b" d="M16 6l2.29 2.29-4.88 4.88-4-4L2 16.59 3.41 18l6-6 4 4 6.3-6.29L22 12V6z"/></svg>
<div class="a t" style="top:229.05px;font-size:14px;line-height:14px;color:#2b2b2b;font-weight:bold;letter-spacing:-0.45px;left:1486.00px;">Como meu faturamento</div>
<div class="a" style="left:1448px;top:263px;width:200px;height:3px;background:#9896c8;border-radius:2px"></div>
<svg class="a" style="left:0;top:0" width="1918" height="912" viewBox="0 0 1918 912"><rect x="1455" y="446.5" width="300" height="1.5" fill="#888"/><line x1="1494.5" y1="443" x2="1560" y2="394" stroke="#7d7cbf" stroke-width="3"/><rect x="1491" y="439.5" width="7" height="7" fill="#7d7cbf"/><rect x="1455" y="707.5" width="300" height="1.5" fill="#888"/><line x1="1494.5" y1="704" x2="1560" y2="630" stroke="#a09fd6" stroke-width="3"/><rect x="1491" y="700.5" width="7" height="7" fill="#a09fd6"/></svg>
<div class="a" style="left:1442px;top:448.5px;width:63px;height:17.5px;background:#fff;border-radius:0 8px 0 6px"></div>
<div class="a t" style="top:451.74px;font-size:10px;line-height:10px;color:#222;font-weight:bold;letter-spacing:0.35px;left:1449.80px;">393 x 261</div>
<svg class="a" style="left:1452.00px;top:485.00px" width="24" height="24" viewBox="0 0 24 24"><path fill="#2b2b2b" d="M23 8c0 1.1-.9 2-2 2-.18 0-.35-.02-.51-.07l-3.56 3.55c.05.16.07.34.07.52 0 1.1-.9 2-2 2s-2-.9-2-2c0-.18.02-.36.07-.52l-2.55-2.55c-.16.05-.34.07-.52.07s-.36-.02-.52-.07l-4.55 4.56c.05.16.07.33.07.51 0 1.1-.9 2-2 2s-2-.9-2-2 .9-2 2-2c.18 0 .35.02.51.07l4.56-4.55C8.02 9.36 8 9.18 8 9c0-1.1.9-2 2-2s2 .9 2 2c0 .18-.02.36-.07.52l2.55 2.55c.16-.05.34-.07.52-.07s.36.02.52.07l3.55-3.56C19.02 8.35 19 8.18 19 8c0-1.1.9-2 2-2s2 .9 2 2z"/></svg>
<div class="a t" style="top:490.05px;font-size:14px;line-height:14px;color:#2b2b2b;font-weight:bold;letter-spacing:-0.45px;left:1486.00px;">E meu custo</div>
<div class="a" style="left:1442px;top:708.5px;width:63px;height:17.5px;background:#fff;border-radius:0 8px 0 6px"></div>
<div class="a t" style="top:711.74px;font-size:10px;line-height:10px;color:#222;font-weight:bold;letter-spacing:0.35px;left:1449.80px;">393 x 261</div>
<svg class="a" style="left:1472.00px;top:134.00px" width="60" height="60" viewBox="0 0 24 24"><path fill="#777" d="M10 20v-6h4v6h5v-8h3L12 3 2 12h3v8z"/></svg>
<div class="a t" style="top:193.09px;font-size:11px;line-height:11px;color:#1f2a44;font-weight:bold;left:1443.00px;width:120px;text-align:center;">Página Inicial</div>
<div class="a" style="left:1442.7px;top:188.5px;width:58.5px;height:17.5px;background:#fff;border-radius:0 8px 0 6px"></div>
<div class="a t" style="top:191.73px;font-size:10px;line-height:10px;color:#222;font-weight:bold;letter-spacing:0.35px;left:1451.50px;">131 x 83</div>
<div class="a" style="left:52px;top:739px;width:1474px;height:2px;background:repeating-linear-gradient(90deg,#9a9a9a 0 1px,transparent 1px 2px)"></div>
<div class="a" style="left:912.5px;top:722.5px;width:88px;height:14.5px;border:1px solid #d0d0d0;border-radius:7px;background:#fff"></div>
<div class="a" style="left:905px;top:716px;width:104px;height:10px;background:#ffffff;"></div>
<div class="a t" style="top:726.16px;font-size:9.5px;line-height:9.5px;color:#707070;font-weight:normal;letter-spacing:-0.45px;left:906.50px;width:100px;text-align:center;">Quebra de página 1</div>
<div class="a" style="left:437.5px;top:727.5px;width:37px;height:37px;border-radius:50%;background:rgba(252,252,252,0.75)"></div>
<div class="a" style="left:829.5px;top:727.5px;width:37px;height:37px;border-radius:50%;background:rgba(252,252,252,0.75)"></div>
<div class="a" style="left:1222.5px;top:727.5px;width:37px;height:37px;border-radius:50%;background:rgba(252,252,252,0.75)"></div>
<div class="a" style="left:77px;top:745px;width:381px;height:200px;background:#fff;border-radius:6px"></div>
<div class="a" style="left:469px;top:745px;width:381px;height:200px;background:#fff;border-radius:6px"></div>
<div class="a" style="left:862px;top:745px;width:381px;height:200px;background:#fff;border-radius:6px"></div>
<div class="a" style="left:1255px;top:745px;width:400px;height:200px;background:#fff;border-radius:6px"></div>
<div class="a" style="left:1255px;top:784px;width:400px;height:1px;background:#e4e6e9;"></div>
<svg class="a" style="left:448px;top:742.8px" width="17" height="5" viewBox="0 0 17 5"><g fill="#4a4a4a"><circle cx="2.5" cy="2.5" r="2.3"/><circle cx="8.5" cy="2.5" r="2.3"/><circle cx="14.5" cy="2.5" r="2.3"/></g></svg>
<svg class="a" style="left:840px;top:742.8px" width="17" height="5" viewBox="0 0 17 5"><g fill="#4a4a4a"><circle cx="2.5" cy="2.5" r="2.3"/><circle cx="8.5" cy="2.5" r="2.3"/><circle cx="14.5" cy="2.5" r="2.3"/></g></svg>
<svg class="a" style="left:1233px;top:742.8px" width="17" height="5" viewBox="0 0 17 5"><g fill="#4a4a4a"><circle cx="2.5" cy="2.5" r="2.3"/><circle cx="8.5" cy="2.5" r="2.3"/><circle cx="14.5" cy="2.5" r="2.3"/></g></svg>
<svg class="a" style="left:0;top:0" width="1918" height="912" viewBox="0 0 1918 912"><path d="M139.2 770.3 L141.3 772.5 L142.0 776.7 L141.3 783.3 L145.8 786.7 L153.3 784.2 L160.0 781.7 L165.8 783.3 L170.8 781.7 L175.0 774.2 L177.5 778.3 L181.7 785.0 L181.7 790.8 L190.0 795.0 L197.5 797.5 L203.3 800.8 L207.5 801.7 L220.0 803.7 L225.8 806.7 L232.5 811.7 L240.0 813.7 L242.5 817.5 L243.3 824.2 L240.8 830.8 L235.0 838.3 L231.7 843.3 L227.5 847.5 L226.7 853.3 L226.7 860.0 L225.8 865.0 L223.3 868.0 L221.7 876.7 L218.3 883.3 L211.7 887.5 L201.7 890.0 L195.8 893.3 L189.2 897.0 L187.0 901.7 L186.3 908.3 L185.0 920.0 L146.7 920.0 L156.7 912.0 L161.7 907.5 L166.3 903.7 L163.3 898.3 L163.3 893.3 L160.0 891.7 L158.3 888.3 L150.0 884.2 L149.2 876.7 L150.0 870.0 L148.3 863.3 L146.7 860.0 L140.0 859.7 L139.2 852.5 L139.2 848.0 L132.5 845.8 L125.0 841.7 L120.0 840.0 L119.2 833.3 L115.0 832.0 L105.8 837.0 L98.3 838.0 L96.7 833.3 L91.7 833.3 L86.7 828.3 L84.2 823.3 L87.5 815.0 L91.7 811.7 L100.0 809.2 L100.8 801.7 L100.0 790.0 L101.7 785.0 L110.8 783.3 L114.2 787.5 L119.2 788.3 L123.3 783.3 L122.5 775.0 L131.7 776.7 Z" fill="#e0e0e0"/><path d="M172.5 887.0 L181.7 888.3 L183.3 893.3 L189.2 897.5 L187.0 901.7 L186.3 908.3 L185.0 920.0 L146.7 920.0 L156.7 912.0 L161.7 907.5 L166.3 903.7 L163.3 898.3 L165.8 891.7 L167.5 888.3 Z" fill="#79acd6"/><path d="M362.29999999999995 907.6 A4.3 4.3 0 1 1 369.5 907.6" fill="none" stroke="#1a1a1a" stroke-width="1.5"/><rect x="364.7" y="903.6" width="2.3" height="10" rx="1" fill="#1a1a1a"/><rect x="365.9" y="910.5" width="3.5" height="2" fill="#1a1a1a"/><path d="M531.2 770.3 L533.3 772.5 L534.0 776.7 L533.3 783.3 L537.8 786.7 L545.3 784.2 L552.0 781.7 L557.8 783.3 L562.8 781.7 L567.0 774.2 L569.5 778.3 L573.7 785.0 L573.7 790.8 L582.0 795.0 L589.5 797.5 L595.3 800.8 L599.5 801.7 L612.0 803.7 L617.8 806.7 L624.5 811.7 L632.0 813.7 L634.5 817.5 L635.3 824.2 L632.8 830.8 L627.0 838.3 L623.7 843.3 L619.5 847.5 L618.7 853.3 L618.7 860.0 L617.8 865.0 L615.3 868.0 L613.7 876.7 L610.3 883.3 L603.7 887.5 L593.7 890.0 L587.8 893.3 L581.2 897.0 L579.0 901.7 L578.3 908.3 L577.0 920.0 L538.7 920.0 L548.7 912.0 L553.7 907.5 L558.3 903.7 L555.3 898.3 L555.3 893.3 L552.0 891.7 L550.3 888.3 L542.0 884.2 L541.2 876.7 L542.0 870.0 L540.3 863.3 L538.7 860.0 L532.0 859.7 L531.2 852.5 L531.2 848.0 L524.5 845.8 L517.0 841.7 L512.0 840.0 L511.2 833.3 L507.0 832.0 L497.8 837.0 L490.3 838.0 L488.7 833.3 L483.7 833.3 L478.7 828.3 L476.2 823.3 L479.5 815.0 L483.7 811.7 L492.0 809.2 L492.8 801.7 L492.0 790.0 L493.7 785.0 L502.8 783.3 L506.2 787.5 L511.2 788.3 L515.3 783.3 L514.5 775.0 L523.7 776.7 Z" fill="#e0e0e0"/><path d="M562.8 886.7 L568.7 876.7 L575.3 870.8 L583.7 869.2 L585.3 863.3 L587.0 855.8 L595.3 852.5 L600.3 854.2 L607.0 856.7 L613.7 859.2 L612.0 865.0 L615.3 871.7 L613.7 876.7 L610.3 883.3 L603.7 887.5 L593.7 890.0 L587.8 893.3 L581.2 897.0 L577.0 893.3 L575.3 886.7 Z" fill="#9b9ac7"/><path d="M754.3 907.6 A4.3 4.3 0 1 1 761.5 907.6" fill="none" stroke="#1a1a1a" stroke-width="1.5"/><rect x="756.6999999999999" y="903.6" width="2.3" height="10" rx="1" fill="#1a1a1a"/><rect x="757.9" y="910.5" width="3.5" height="2" fill="#1a1a1a"/><path d="M924.2 770.3 L926.3 772.5 L927.0 776.7 L926.3 783.3 L930.8 786.7 L938.3 784.2 L945.0 781.7 L950.8 783.3 L955.8 781.7 L960.0 774.2 L962.5 778.3 L966.7 785.0 L966.7 790.8 L975.0 795.0 L982.5 797.5 L988.3 800.8 L992.5 801.7 L1005.0 803.7 L1010.8 806.7 L1017.5 811.7 L1025.0 813.7 L1027.5 817.5 L1028.3 824.2 L1025.8 830.8 L1020.0 838.3 L1016.7 843.3 L1012.5 847.5 L1011.7 853.3 L1011.7 860.0 L1010.8 865.0 L1008.3 868.0 L1006.7 876.7 L1003.3 883.3 L996.7 887.5 L986.7 890.0 L980.8 893.3 L974.2 897.0 L972.0 901.7 L971.3 908.3 L970.0 920.0 L931.7 920.0 L941.7 912.0 L946.7 907.5 L951.3 903.7 L948.3 898.3 L948.3 893.3 L945.0 891.7 L943.3 888.3 L935.0 884.2 L934.2 876.7 L935.0 870.0 L933.3 863.3 L931.7 860.0 L925.0 859.7 L924.2 852.5 L924.2 848.0 L917.5 845.8 L910.0 841.7 L905.0 840.0 L904.2 833.3 L900.0 832.0 L890.8 837.0 L883.3 838.0 L881.7 833.3 L876.7 833.3 L871.7 828.3 L869.2 823.3 L872.5 815.0 L876.7 811.7 L885.0 809.2 L885.8 801.7 L885.0 790.0 L886.7 785.0 L895.8 783.3 L899.2 787.5 L904.2 788.3 L908.3 783.3 L907.5 775.0 L916.7 776.7 Z" fill="#e0e0e0"/><path d="M982.5 797.5 L988.3 800.8 L992.5 801.7 L1005.0 803.7 L1010.8 806.7 L1017.5 811.7 L1025.0 813.7 L1027.5 817.5 L1028.3 824.2 L1025.8 830.8 L1020.0 838.3 L1016.7 843.3 L1012.5 847.5 L1011.7 853.3 L1011.7 860.0 L1010.8 865.0 L1008.3 868.0 L1005.8 863.3 L1006.7 859.7 L1000.0 856.7 L993.3 854.2 L983.3 855.0 L982.5 843.3 L981.7 838.3 L983.3 830.0 L980.0 826.7 L976.7 820.0 L974.2 813.3 L978.3 806.7 L981.7 800.0 Z" fill="#f2ad6f"/><path d="M1147.3000000000002 907.6 A4.3 4.3 0 1 1 1154.5 907.6" fill="none" stroke="#1a1a1a" stroke-width="1.5"/><rect x="1149.7" y="903.6" width="2.3" height="10" rx="1" fill="#1a1a1a"/><rect x="1150.9" y="910.5" width="3.5" height="2" fill="#1a1a1a"/></svg>
<div class="a t" style="top:797.36px;font-size:16px;line-height:16px;color:#2b2b2b;font-weight:bold;left:159.00px;width:400px;text-align:center;">Região Sul</div>
<div class="a t" style="top:819.44px;font-size:40px;line-height:40px;color:#477db9;font-weight:bold;letter-spacing:-0.5px;left:159.20px;width:400px;text-align:center;">R$ 1,5 mi</div>
<div class="a t" style="top:801.26px;font-size:16px;line-height:16px;color:#2b2b2b;font-weight:bold;letter-spacing:0.1px;left:551.60px;width:400px;text-align:center;">Região Sudeste</div>
<div class="a t" style="top:822.76px;font-size:31px;line-height:31px;color:#9b9bc8;font-weight:bold;letter-spacing:0.15px;left:551.20px;width:400px;text-align:center;">R$ 347,8 mil</div>
<div class="a t" style="top:801.26px;font-size:16px;line-height:16px;color:#2b2b2b;font-weight:bold;letter-spacing:0.1px;left:944.40px;width:400px;text-align:center;">Região Nordeste</div>
<div class="a t" style="top:822.76px;font-size:31px;line-height:31px;color:#f0ab6e;font-weight:bold;letter-spacing:0.4px;left:944.00px;width:400px;text-align:center;">R$ 547,0 mil</div>
<svg class="a" style="left:1265.25px;top:753.25px" width="23.5" height="23.5" viewBox="0 0 24 24"><path fill="#2b2b2b" d="M20.5 3l-.16.03L15 5.1 9 3 3.36 4.9c-.21.07-.36.25-.36.48V20.5c0 .28.22.5.5.5l.16-.03L9 18.9l6 2.1 5.64-1.9c.21-.07.36-.25.36-.48V3.5c0-.28-.22-.5-.5-.5zM15 19l-6-2.11V5l6 2.11V19z"/></svg>
<div class="a t" style="top:757.35px;font-size:14px;line-height:14px;color:#2b2b2b;font-weight:bold;letter-spacing:-0.4px;left:1299.30px;">Qual o meu share por região / estado</div>
<svg class="a" style="left:0;top:0" width="1918" height="912" viewBox="0 0 1918 912">
<circle cx="1540" cy="879" r="43.5" fill="#79a9d3"/>
<path d="M1540 879 L1504 855 A43.5 43.5 0 0 1 1540 835.5 Z" fill="#a8c6df"/>
<path d="M1504 855 L1540 879" stroke="#888" stroke-width="0.8"/>
<path d="M1486 840.5 H1518 L1521 846" stroke="#777" stroke-width="0.8" fill="none"/>
<path d="M1485 903 H1504 L1508 900" stroke="#777" stroke-width="0.8" fill="none"/>
</svg>
<div class="a t" style="top:833.33px;font-size:10px;line-height:10px;color:#2b2b2b;font-weight:bold;letter-spacing:-0.1px;left:1414.60px;">R$ 6.0 mi(16%)</div>
<div class="a t" style="top:896.74px;font-size:10px;line-height:10px;color:#2b2b2b;font-weight:bold;letter-spacing:-0.1px;left:1407.00px;">R$ 13.4 mi(36%)</div>
<div class="a" style="left:1526px;top:85px;width:341px;height:827px;background:#eeeeee;"></div>
<div class="a" style="left:1526px;top:85px;width:341px;height:2px;background:linear-gradient(#e2e2e2,#ececec);"></div>
<div class="a t" style="top:93.84px;font-size:12px;line-height:12px;color:#666;font-weight:bold;left:1539.40px;">Desenho</div>
<div class="a" style="left:1526px;top:114px;width:341px;height:1px;background:#d9d9d9;"></div>
<svg class="a" style="left:1574.40px;top:137.90px" width="32" height="32" viewBox="0 0 24 24"><path fill="#666" d="M2.5 4v3h5v12h3V7h5V4h-13zm19 5h-9v3h3v7h3v-7h3V9z"/></svg>
<div class="a t" style="top:179.60px;font-size:13px;line-height:13px;color:#666;font-weight:bold;left:1530.00px;width:120px;text-align:center;">Título</div>
<svg class="a" style="left:1680.40px;top:137.90px" width="32" height="32" viewBox="0 0 24 24"><path fill="#666" d="M3 18h12v-2H3v2zM3 6v2h18V6H3zm0 7h18v-2H3v2z"/></svg>
<div class="a t" style="top:179.60px;font-size:13px;line-height:13px;color:#666;font-weight:bold;left:1636.00px;width:120px;text-align:center;">Texto</div>
<svg class="a" style="left:1786.40px;top:137.90px" width="32" height="32" viewBox="0 0 24 24"><path fill="#666" d="M9.4 16.6L4.8 12l4.6-4.6L8 6l-6 6 6 6 1.4-1.4zm5.2 0l4.6-4.6-4.6-4.6L16 6l6 6-6 6-1.4-1.4z"/></svg>
<div class="a t" style="top:179.60px;font-size:13px;line-height:13px;color:#666;font-weight:bold;left:1742.00px;width:120px;text-align:center;">HTML</div>
<svg class="a" style="left:1574.90px;top:222.40px" width="32" height="32" viewBox="0 0 24 24"><path fill="#666" d="M21 19V5c0-1.1-.9-2-2-2H5c-1.1 0-2 .9-2 2v14c0 1.1.9 2 2 2h14c1.1 0 2-.9 2-2zM8.5 13.5l2.5 3.01L14.5 12l4.5 6H5l3.5-4.5z"/></svg>
<div class="a t" style="top:264.00px;font-size:13px;line-height:13px;color:#666;font-weight:bold;left:1530.50px;width:120px;text-align:center;">Imagem</div>
<svg class="a" style="left:1680.60px;top:221.60px" width="32" height="32" viewBox="0 0 24 24"><path fill="#666" d="M11.99 2C6.47 2 2 6.48 2 12s4.47 10 9.99 10C17.52 22 22 17.52 22 12S17.52 2 11.99 2zM12 20c-4.42 0-8-3.58-8-8s3.58-8 8-8 8 3.58 8 8-3.58 8-8 8zm3.5-9c.83 0 1.5-.67 1.5-1.5S16.33 8 15.5 8 14 8.67 14 9.5s.67 1.5 1.5 1.5zm-7 0c.83 0 1.5-.67 1.5-1.5S9.33 8 8.5 8 7 8.67 7 9.5 7.67 11 8.5 11zm3.5 6.5c2.33 0 4.31-1.46 5.11-3.5H6.89c.8 2.04 2.78 3.5 5.11 3.5z"/></svg>
<div class="a t" style="top:264.00px;font-size:13px;line-height:13px;color:#666;font-weight:bold;left:1636.20px;width:120px;text-align:center;">Ícone</div>
<svg class="a" style="left:1786.40px;top:221.90px" width="32" height="32" viewBox="0 0 24 24"><path fill="#666" d="M20 4H4c-1.1 0-1.99.9-1.99 2L2 18c0 1.1.9 2 2 2h16c1.1 0 2-.9 2-2V6c0-1.1-.9-2-2-2zm-5 14H4v-4h11v4zm0-5H4V9h11v4zm5 5h-4V9h4v9z"/></svg>
<div class="a t" style="top:264.00px;font-size:13px;line-height:13px;color:#666;font-weight:bold;left:1742.00px;width:120px;text-align:center;">Container</div>
<svg class="a" style="left:1574.90px;top:438.90px" width="32" height="32" viewBox="0 0 24 24"><path fill="#666" d="M20.38 8.57l-1.23 1.85a8 8 0 0 1-.22 7.58H5.07A8 8 0 0 1 15.58 6.85l1.85-1.23A10 10 0 0 0 3.35 19a2 2 0 0 0 1.72 1h13.85a2 2 0 0 0 1.74-1 10 10 0 0 0-.27-10.44zm-9.79 6.84a2 2 0 0 0 2.83 0l5.66-8.49-8.49 5.66a2 2 0 0 0 0 2.83z"/></svg>
<div class="a t" style="top:480.50px;font-size:13px;line-height:13px;color:#666;font-weight:bold;left:1530.50px;width:120px;text-align:center;">KPI</div>
<svg class="a" style="left:1680.30px;top:438.40px" width="33" height="33" viewBox="0 0 24 24"><path fill="#666" d="M5 9.2h3V19H5zM10.6 5h2.8v14h-2.8zm5.6 8H19v6h-2.8z"/></svg>
<div class="a t" style="top:480.50px;font-size:13px;line-height:13px;color:#666;font-weight:bold;left:1636.40px;width:120px;text-align:center;">Gráfico</div>
<svg class="a" style="left:1574.90px;top:523.30px" width="32" height="32" viewBox="0 0 24 24"><path fill="#666" d="M12 2C8.13 2 5 5.13 5 9c0 5.25 7 13 7 13s7-7.75 7-13c0-3.87-3.13-7-7-7zm0 9.5c-1.38 0-2.5-1.12-2.5-2.5s1.12-2.5 2.5-2.5 2.5 1.12 2.5 2.5-1.12 2.5-2.5 2.5z"/></svg>
<div class="a t" style="top:565.00px;font-size:13px;line-height:13px;color:#666;font-weight:bold;left:1530.50px;width:120px;text-align:center;">Mapa</div>
<svg class="a" style="left:1680.80px;top:523.30px" width="32" height="32" viewBox="0 0 24 24"><path fill="#666" d="M3 14h4v-4H3v4zm0 5h4v-4H3v4zM3 9h4V5H3v4zm5 5h13v-4H8v4zm0 5h13v-4H8v4zM8 5v4h13V5H8z"/></svg>
<div class="a t" style="top:565.00px;font-size:13px;line-height:13px;color:#666;font-weight:bold;left:1636.40px;width:120px;text-align:center;">Big Table</div>
<svg class="a" style="left:1574px;top:299px" width="34" height="34" viewBox="0 0 34 34">
<path d="M16.3 27.5 H7.8 Q5.8 27.5 5.8 25.5 V8.2 Q5.8 6.2 7.8 6.2 H25.2 Q27.2 6.2 27.2 8.2 V14.5" fill="none" stroke="#666" stroke-width="2.4"/>
<rect x="5.8" y="10" width="21.4" height="2.4" fill="#666"/>
<rect x="8.7" y="2.2" width="2.3" height="4.5" fill="#666"/><rect x="22.2" y="2.2" width="2.3" height="4.5" fill="#666"/>
<circle cx="24.7" cy="23.2" r="6.6" fill="#666"/><path d="M24.2 19.3 V23.6 L26.8 26.3" stroke="#eee" stroke-width="1.5" fill="none"/></svg>
<div class="a t" style="top:339.50px;font-size:13px;line-height:13px;color:#666;font-weight:bold;left:1530.00px;width:120px;text-align:center;">Última</div>
<div class="a t" style="top:355.50px;font-size:13px;line-height:13px;color:#666;font-weight:bold;left:1530.00px;width:120px;text-align:center;">atualização</div>
<svg class="a" style="left:1790.2px;top:442.6px" width="25.6" height="24.2" viewBox="0 0 27 27" preserveAspectRatio="none">
<path d="M3 0 H24 Q27 0 27 3 V6 H0 V3 Q0 0 3 0 Z" fill="#666"/>
<path d="M0 8.5 H7.5 V27 H3 Q0 27 0 24 Z" fill="#666"/><rect x="10" y="8.5" width="7" height="18.5" fill="#666"/>
<path d="M19.5 8.5 H27 V24 Q27 27 24 27 H19.5 Z" fill="#666"/></svg>
<div class="a t" style="top:480.50px;font-size:13px;line-height:13px;color:#666;font-weight:bold;left:1742.50px;width:120px;text-align:center;">Tabela</div>
<div class="a" style="left:1526px;top:385px;width:341px;height:1px;background:#d9d9d9;"></div>
<div class="a t" style="top:394.84px;font-size:12px;line-height:12px;color:#666;font-weight:bold;left:1539.40px;">Objetos</div>
<div class="a" style="left:1526px;top:415px;width:341px;height:1px;background:#d9d9d9;"></div>
<div class="a" style="left:1867px;top:85px;width:51px;height:827px;background:#eeeeee;"></div>
<div class="a" style="left:1867px;top:85px;width:1px;height:827px;background:#c9c9c9;"></div>
<div class="a" style="left:1868px;top:85px;width:50px;height:51px;background:#fafafa;"></div>
<div class="a" style="left:1868px;top:85px;width:50px;height:2px;background:linear-gradient(#e6e6e6,#f6f6f6);"></div>
<div class="a" style="left:1868px;top:136px;width:50px;height:1px;background:#dddddd;"></div>
<svg class="a" style="left:1884.00px;top:101.00px" width="20" height="20" viewBox="0 0 24 24"><path fill="#3d6ff2" d="M12 2C6.48 2 2 6.48 2 12s4.48 10 10 10 10-4.48 10-10S17.52 2 12 2zm5 11h-4v4h-2v-4H7v-2h4V7h2v4h4v2z"/></svg>
<svg class="a" style="left:1884.00px;top:152.60px" width="20" height="20" viewBox="0 0 24 24"><path fill="#666" d="M3 18h13v-2H3v2zm0-5h10v-2H3v2zm0-7v2h13V6H3zm18 9.59L17.42 12 21 8.41 19.59 7l-5 5 5 5L21 15.59z"/></svg>
<svg class="a" style="left:1884px;top:204px" width="20" height="20" viewBox="0 0 20 20">
<path d="M2.5 1 H13 L17 5 V9 L9 17 H2.5 Q1 17 1 15.5 V2.5 Q1 1 2.5 1 Z" fill="#666"/>
<rect x="3.5" y="3" width="8" height="3.5" fill="#eee"/><circle cx="8" cy="11" r="2.3" fill="#eee"/>
<path d="M11 18.5 L17.5 12" stroke="#666" stroke-width="2"/><rect x="14" y="17.6" width="5.5" height="1.6" fill="#666"/></svg>
<svg class="a" style="left:1884px;top:256px" width="21" height="21" viewBox="0 0 21 21">
<path d="M7 4 L15.5 1.5 L19.5 13.5 L11 16 Z" fill="#666"/><path d="M6 6 L9.5 16.5 L7 17.2 L5 9 Z" fill="#666"/><path d="M4 9.5 L6 16.5 L1.5 15.5 Z" fill="#666"/></svg>
<svg class="a" style="left:1883.00px;top:307.00px" width="22" height="22" viewBox="0 0 24 24"><path fill="#666" d="M4.25 5.61C6.27 8.2 10 13 10 13v6c0 .55.45 1 1 1h2c.55 0 1-.45 1-1v-6s3.72-4.8 5.74-7.39c.51-.66.04-1.61-.79-1.61H5.04c-.83 0-1.3.95-.79 1.61z"/></svg>
<svg class="a" style="left:1886px;top:360px" width="16" height="22" viewBox="0 0 16 22"><rect x="2.9" y="2.2" width="10.4" height="16.4" rx="1.8" fill="none" stroke="#666" stroke-width="2.2"/></svg>
<svg class="a" style="left:1884.00px;top:411.50px" width="20" height="20" viewBox="0 0 24 24"><path fill="#666" d="M18 8h-1V6c0-2.76-2.24-5-5-5S7 3.24 7 6v2H6c-1.1 0-2 .9-2 2v10c0 1.1.9 2 2 2h12c1.1 0 2-.9 2-2V10c0-1.1-.9-2-2-2zm-6 9c-1.1 0-2-.9-2-2s.9-2 2-2 2 .9 2 2-.9 2-2 2zm3.1-9H8.9V6c0-1.71 1.39-3.1 3.1-3.1 1.71 0 3.1 1.39 3.1 3.1v2z"/></svg>
<div class="a" style="left:1868px;top:808px;width:50px;height:1px;background:#d9d9d9;"></div>
<svg class="a" style="left:1884.00px;top:824.00px" width="20" height="20" viewBox="0 0 24 24"><path fill="#666" d="M17 3H5c-1.11 0-2 .9-2 2v14c0 1.1.89 2 2 2h14c1.1 0 2-.9 2-2V7l-4-4zm-5 16c-1.66 0-3-1.34-3-3s1.34-3 3-3 3 1.34 3 3-1.34 3-3 3zm3-10H5V5h10v4z"/></svg>
<div class="a" style="left:1868px;top:860px;width:50px;height:1px;background:#d9d9d9;"></div>
<svg class="a" style="left:1884.00px;top:875.60px" width="20" height="20" viewBox="0 0 24 24"><path fill="#666" d="M6 19c0 1.1.9 2 2 2h8c1.1 0 2-.9 2-2V7H6v12zM19 4h-3.5l-1-1h-5l-1 1H5v2h14V4z"/></svg>
</body></html>
